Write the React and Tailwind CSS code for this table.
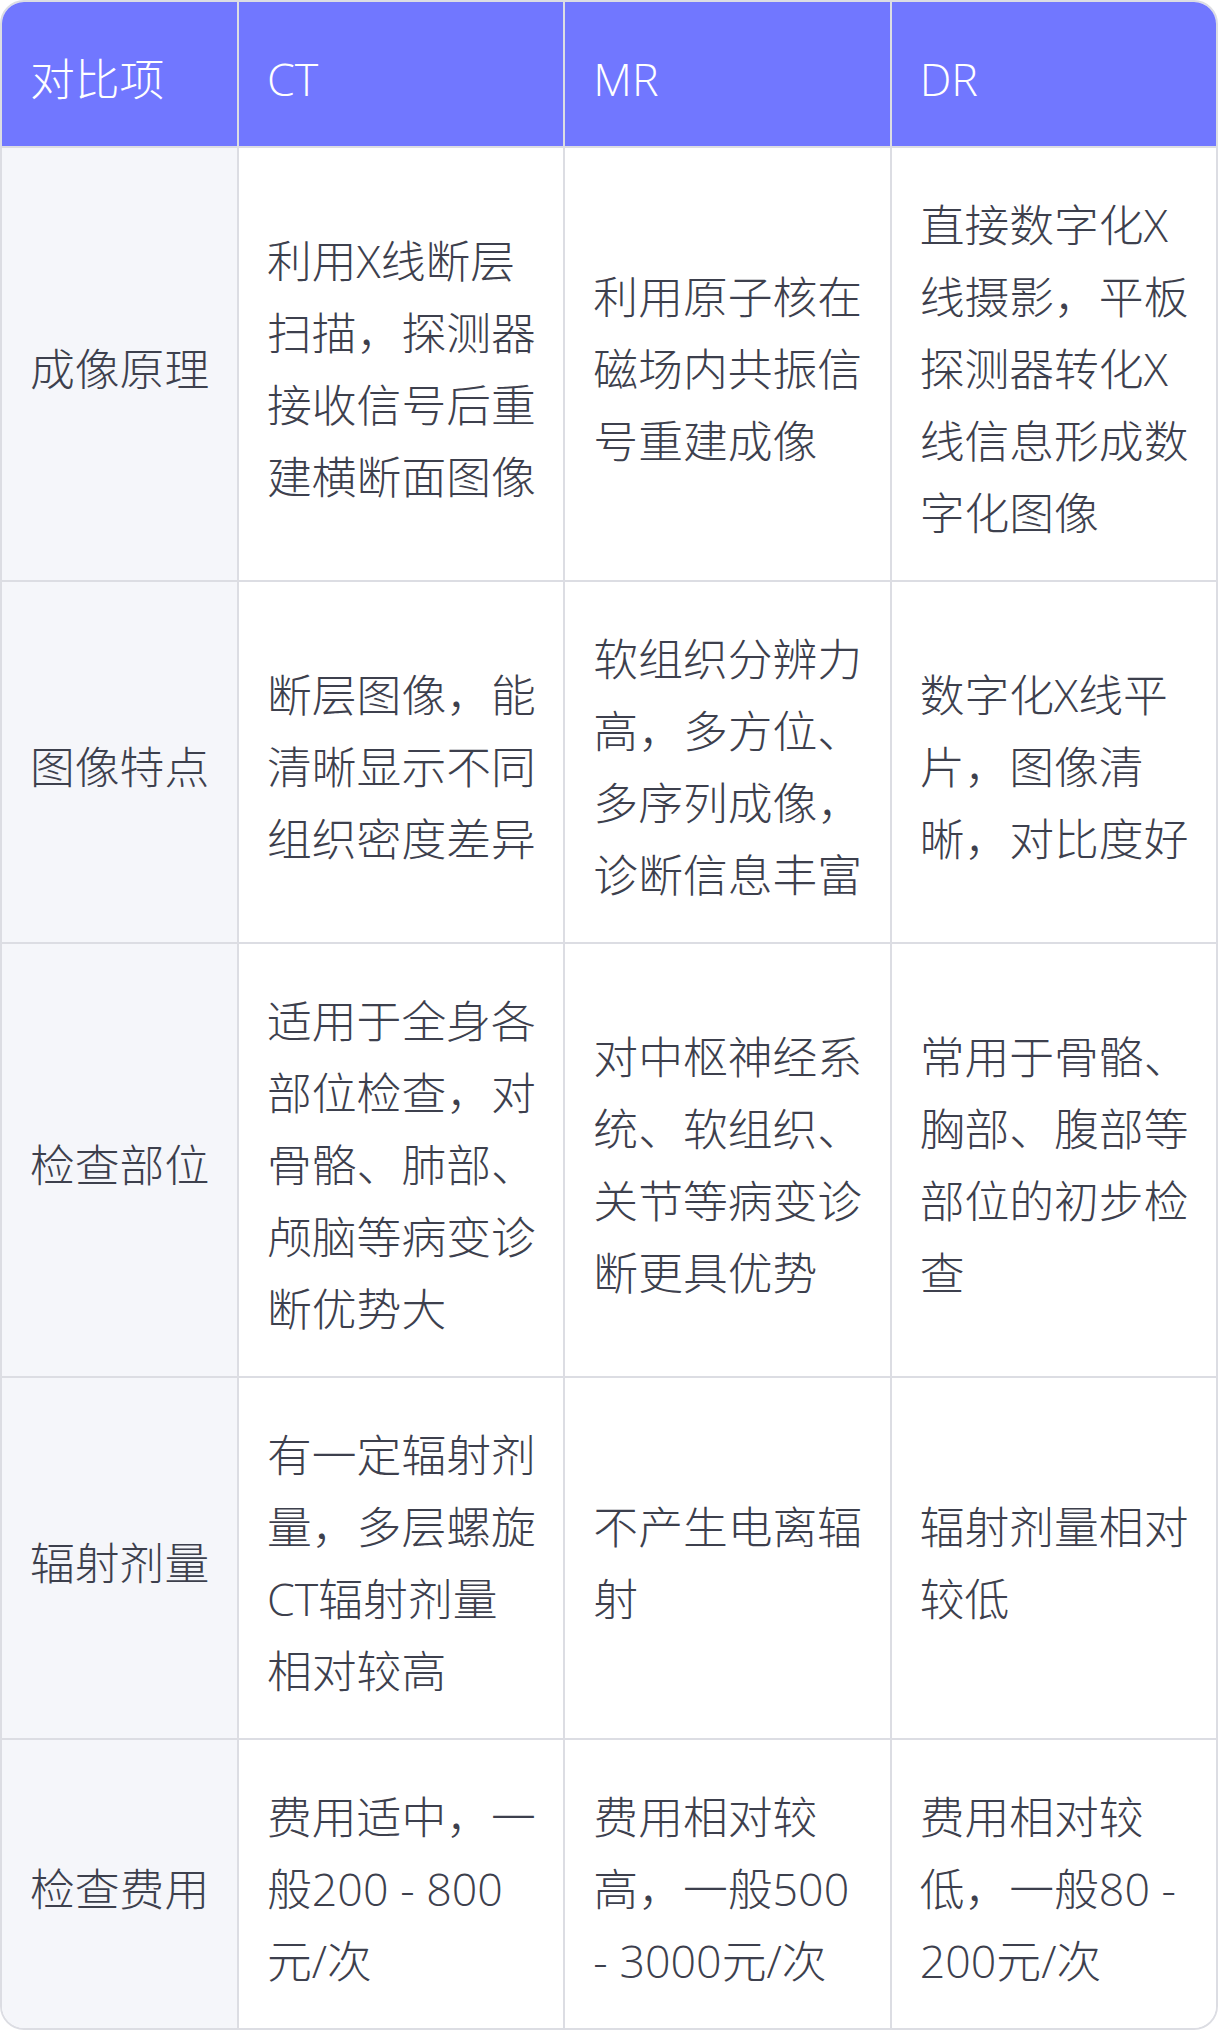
const head = ["对比项", "CT", "MR", "DR"];

const rows = [
  [
    "成像原理",
    ["利用X线断层", "扫描，探测器", "接收信号后重", "建横断面图像"],
    ["利用原子核在", "磁场内共振信", "号重建成像"],
    ["直接数字化X", "线摄影，平板", "探测器转化X", "线信息形成数", "字化图像"],
  ],
  [
    "图像特点",
    ["断层图像，能", "清晰显示不同", "组织密度差异"],
    ["软组织分辨力", "高，多方位、", "多序列成像，", "诊断信息丰富"],
    ["数字化X线平", "片，图像清", "晰，对比度好"],
  ],
  [
    "检查部位",
    ["适用于全身各", "部位检查，对", "骨骼、肺部、", "颅脑等病变诊", "断优势大"],
    ["对中枢神经系", "统、软组织、", "关节等病变诊", "断更具优势"],
    ["常用于骨骼、", "胸部、腹部等", "部位的初步检", "查"],
  ],
  [
    "辐射剂量",
    ["有一定辐射剂", "量，多层螺旋", "CT辐射剂量", "相对较高"],
    ["不产生电离辐", "射"],
    ["辐射剂量相对", "较低"],
  ],
  [
    "检查费用",
    ["费用适中，一", "般200 - 800", "元/次"],
    ["费用相对较", "高，一般500", "- 3000元/次"],
    ["费用相对较", "低，一般80 -", "200元/次"],
  ],
];

function Cell({ lines, first, top, header }) {
  return (
    <div
      className={
        "flex flex-col justify-center pt-[41px] pb-[31px] pl-[28px] pr-[20px] " +
        (first ? "" : "border-l-2 border-[#dcdde3] ") +
        (top ? "" : "border-t-2 border-[#dcdde3] ") +
        (header
          ? "bg-[#7177ff] text-white"
          : first
          ? "bg-[#f5f6fa] text-[#3d404d]"
          : "bg-white text-[#3d404d]")
      }
    >
      {lines.map((l, i) => (
        <div key={i} className="whitespace-nowrap">
          {l}
        </div>
      ))}
    </div>
  );
}

export default function App() {
  return (
    <div className="w-[1218px] bg-white">
      <div
        className="overflow-hidden rounded-[24px] border-2 border-[#dcdde3] text-[44.8px] leading-[72px] font-light"
        style={{ fontFamily: '"Open Sans", "Noto Sans CJK SC", sans-serif' }}
      >
        <div className="grid grid-cols-[235px_1fr_1fr_1fr]">
          {head.map((h, i) => (
            <Cell key={h} lines={[h]} first={i === 0} top header />
          ))}
          {rows.map((r) =>
            r.map((c, i) => (
              <Cell
                key={r[0] + i}
                lines={i === 0 ? [c] : c}
                first={i === 0}
              />
            ))
          )}
        </div>
      </div>
    </div>
  );
}
